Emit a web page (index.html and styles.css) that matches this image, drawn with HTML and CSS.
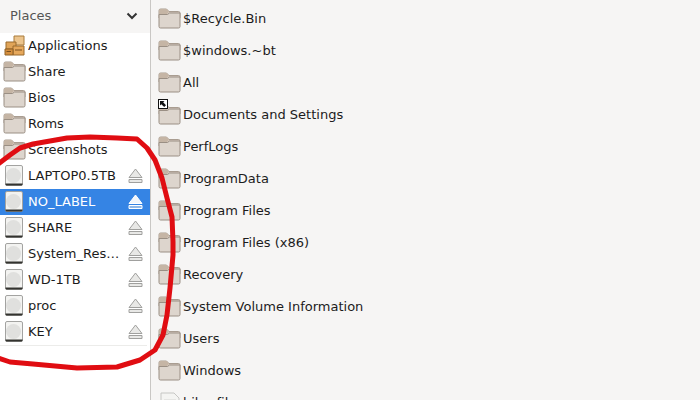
FILE: index.html
```html
<!DOCTYPE html>
<html lang="en">
<head>
  <meta charset="UTF-8">
  <title>Places</title>
  <link rel="stylesheet" href="styles.css">
</head>
<body>
  <svg class="defs" width="0" height="0">
    <symbol id="folder" viewBox="0 0 23 21">
      <path d="M1 10V2.500Q1 1 2.500 1H8.500L11 3.500H20.500Q22 3.500 22 5V10Z" fill="#d6cabf" stroke="#a99d91"/>
      <path d="M1 3Q1 1 3 1H8.500L11 3.500L9 6H1Z" fill="#c5b5a5"/>
      <path d="M1 6.500H9.500L11.500 5H22V18.500Q22 20 20.500 20H2.500Q1 20 1 18.500Z" fill="#ddd5cd" stroke="#9a8f84"/>
    </symbol>
    <symbol id="drive" viewBox="0 0 18 21">
      <rect x="0.500" y="0.500" width="17" height="20" rx="1.500" fill="#f3f3f1" stroke="#a3a3a1"/>
      <circle cx="8.500" cy="10.500" r="7.500" fill="#e0e0de"/>
      <path d="M0.500 18.500H17.500V19.500Q17.500 20.500 16.500 20.500H1.500Q0.500 20.500 0.500 19.500Z" fill="#33332f"/>
    </symbol>
    <symbol id="eject" viewBox="0 0 15 15">
      <path d="M7.500 1L14 9.500H1Z" fill="#e8e8e6" stroke="#a0a09e"/>
      <path d="M1 11.500H14V14.500H1Z" fill="#e8e8e6" stroke="#a0a09e"/>
    </symbol>
    <symbol id="eject-on" viewBox="0 0 15 15">
      <path d="M7.500 1L14 9.500H1Z" fill="#f2f6fb" stroke="#fff"/>
      <path d="M1 11.500H14V14.500H1Z" fill="#8fb8e8" stroke="#fff"/>
    </symbol>
  </svg>

  <aside class="sidebar">
    <div class="places-head">
      <span>Places</span>
      <svg class="chevron" width="12" height="8" viewBox="0 0 12 8"><path d="M1.500 1.500L6 6L10.500 1.500" fill="none" stroke="#333" stroke-width="2"/></svg>
    </div>
    <ul class="places">
      <li class="place">
        <svg class="place-icon" width="23" height="21" viewBox="0 0 23 21">
          <path d="M11 1H21V10H11Z" fill="#ecc48c" stroke="#a87a3a"/>
          <path d="M3 7H13V14H3Z" fill="#e0a458" stroke="#9a6a2c"/>
          <path d="M10 11H21V20H10Z" fill="#e6a85c" stroke="#9a6a2c"/>
          <path d="M2 14H10V20H2Z" fill="#d68f3e" stroke="#8e6026"/>
          <path d="M12 15H19M3.500 16.500H8" stroke="#7a5020"/>
        </svg>
        <span class="name">Applications</span>
      </li>
      <li class="place"><svg class="place-icon"><use href="#folder"/></svg><span class="name">Share</span></li>
      <li class="place"><svg class="place-icon"><use href="#folder"/></svg><span class="name">Bios</span></li>
      <li class="place"><svg class="place-icon"><use href="#folder"/></svg><span class="name">Roms</span></li>
      <li class="place"><svg class="place-icon"><use href="#folder"/></svg><span class="name">Screenshots</span></li>
      <li class="place volume"><svg class="drive-icon"><use href="#drive"/></svg><span class="name">LAPTOP0.5TB</span><svg class="eject"><use href="#eject"/></svg></li>
      <li class="place volume selected"><svg class="drive-icon"><use href="#drive"/></svg><span class="name">NO_LABEL</span><svg class="eject"><use href="#eject-on"/></svg></li>
      <li class="place volume"><svg class="drive-icon"><use href="#drive"/></svg><span class="name">SHARE</span><svg class="eject"><use href="#eject"/></svg></li>
      <li class="place volume"><svg class="drive-icon"><use href="#drive"/></svg><span class="name">System_Rescue</span><svg class="eject"><use href="#eject"/></svg></li>
      <li class="place volume"><svg class="drive-icon"><use href="#drive"/></svg><span class="name">WD-1TB</span><svg class="eject"><use href="#eject"/></svg></li>
      <li class="place volume"><svg class="drive-icon"><use href="#drive"/></svg><span class="name">proc</span><svg class="eject"><use href="#eject"/></svg></li>
      <li class="place volume"><svg class="drive-icon"><use href="#drive"/></svg><span class="name">KEY</span><svg class="eject"><use href="#eject"/></svg></li>
    </ul>
    <div class="places-sep"></div>
  </aside>

  <main class="files">
    <div class="file"><svg class="file-icon"><use href="#folder"/></svg><span>$Recycle.Bin</span></div>
    <div class="file"><svg class="file-icon"><use href="#folder"/></svg><span>$windows.~bt</span></div>
    <div class="file"><svg class="file-icon"><use href="#folder"/></svg><span>All</span></div>
    <div class="file">
      <svg class="file-icon"><use href="#folder"/></svg><span>Documents and Settings</span>
      <svg class="link-emblem" width="10" height="10" viewBox="0 0 10 10">
        <rect x="0.500" y="0.500" width="9" height="9" fill="#fff" stroke="#111"/>
        <path d="M2 2H6.500L5.200 3.300L8 6.200L6.200 8L3.300 5.200L2 6.500Z" fill="#111"/>
      </svg>
    </div>
    <div class="file"><svg class="file-icon"><use href="#folder"/></svg><span>PerfLogs</span></div>
    <div class="file"><svg class="file-icon"><use href="#folder"/></svg><span>ProgramData</span></div>
    <div class="file"><svg class="file-icon"><use href="#folder"/></svg><span>Program Files</span></div>
    <div class="file"><svg class="file-icon"><use href="#folder"/></svg><span>Program Files (x86)</span></div>
    <div class="file"><svg class="file-icon"><use href="#folder"/></svg><span>Recovery</span></div>
    <div class="file"><svg class="file-icon"><use href="#folder"/></svg><span>System Volume Information</span></div>
    <div class="file"><svg class="file-icon"><use href="#folder"/></svg><span>Users</span></div>
    <div class="file"><svg class="file-icon"><use href="#folder"/></svg><span>Windows</span></div>
    <div class="file">
      <svg class="file-icon" viewBox="0 0 23 21"><path d="M3 1H16L21 6V21H3Z" fill="#f4f4f2" stroke="#c6c6c4"/><path d="M6 8H18M6 11H18M6 14H18" stroke="#d6d6d4"/></svg><span>hiberfil.sys</span>
    </div>
  </main>

  <!-- red marker drawn over the screenshot -->
  <svg class="scribble" width="700" height="400" viewBox="0 0 700 400">
    <path d="M-2 164L10 155L20 148L33 144L50 141L67 138L90 137L117 138L137 139L147 148L155 160L162 178L167 198L172 217L173 242L173 255L170 288L167 315L163 335L155 350L140 360L117 367L77 368L33 364L10 362L-2 358" fill="none" stroke="#e00d12" stroke-width="5" stroke-linejoin="round" stroke-linecap="round"/>
  </svg>
</body>
</html>
```

FILE: styles.css
```css
html, body, ul, li {
  padding: 0;
  margin: 0;
}
body {
  display: flex;
  width: 700px;
  height: 400px;
  overflow: hidden;
  position: relative;
  background: #f6f5f4;
  color: #2e3436;
  font-family: "DejaVu Sans", sans-serif;
  font-size: 13px;
}
.defs {
  position: absolute;
}
.sidebar {
  flex: none;
  width: 150px;
  height: 400px;
  background: #fff;
  border-right: 1px solid #c9c7c4;
}
.places-head {
  display: flex;
  align-items: center;
  justify-content: space-between;
  height: 33px;
  padding: 0 12px 2px 10px;
  box-sizing: border-box;
  background: #f6f5f4;
  color: #555;
}
.places {
  list-style: none;
}
.place {
  display: flex;
  align-items: center;
  height: 26px;
  padding-left: 3px;
  padding-bottom: 2px;
  box-sizing: border-box;
  color: #1c1c1c;
}
.place-icon {
  flex: none;
  width: 23px;
  height: 21px;
  margin-right: 2px;
}
.drive-icon {
  flex: none;
  width: 18px;
  height: 21px;
  margin: 0 5px 0 2px;
}
.name {
  flex: 1;
  min-width: 0;
  overflow: hidden;
  white-space: nowrap;
  text-overflow: ellipsis;
}
.eject {
  flex: none;
  width: 15px;
  height: 15px;
  margin: 0 7px 0 8px;
}
.selected {
  background: #3584e4;
  color: #fff;
}
.places-sep {
  width: 147px;
  height: 1px;
  background: #ececea;
}
.files {
  flex: 1;
  padding-top: 2px;
  overflow: hidden;
}
.file {
  display: flex;
  align-items: center;
  position: relative;
  height: 32px;
  padding-left: 7px;
  color: #1c1c1c;
  white-space: nowrap;
}
.file-icon {
  flex: none;
  width: 23px;
  height: 21px;
  margin-right: 2px;
}
.link-emblem {
  position: absolute;
  left: 7px;
  top: 1px;
}
.scribble {
  position: absolute;
  left: 0;
  top: 0;
  pointer-events: none;
}
```
